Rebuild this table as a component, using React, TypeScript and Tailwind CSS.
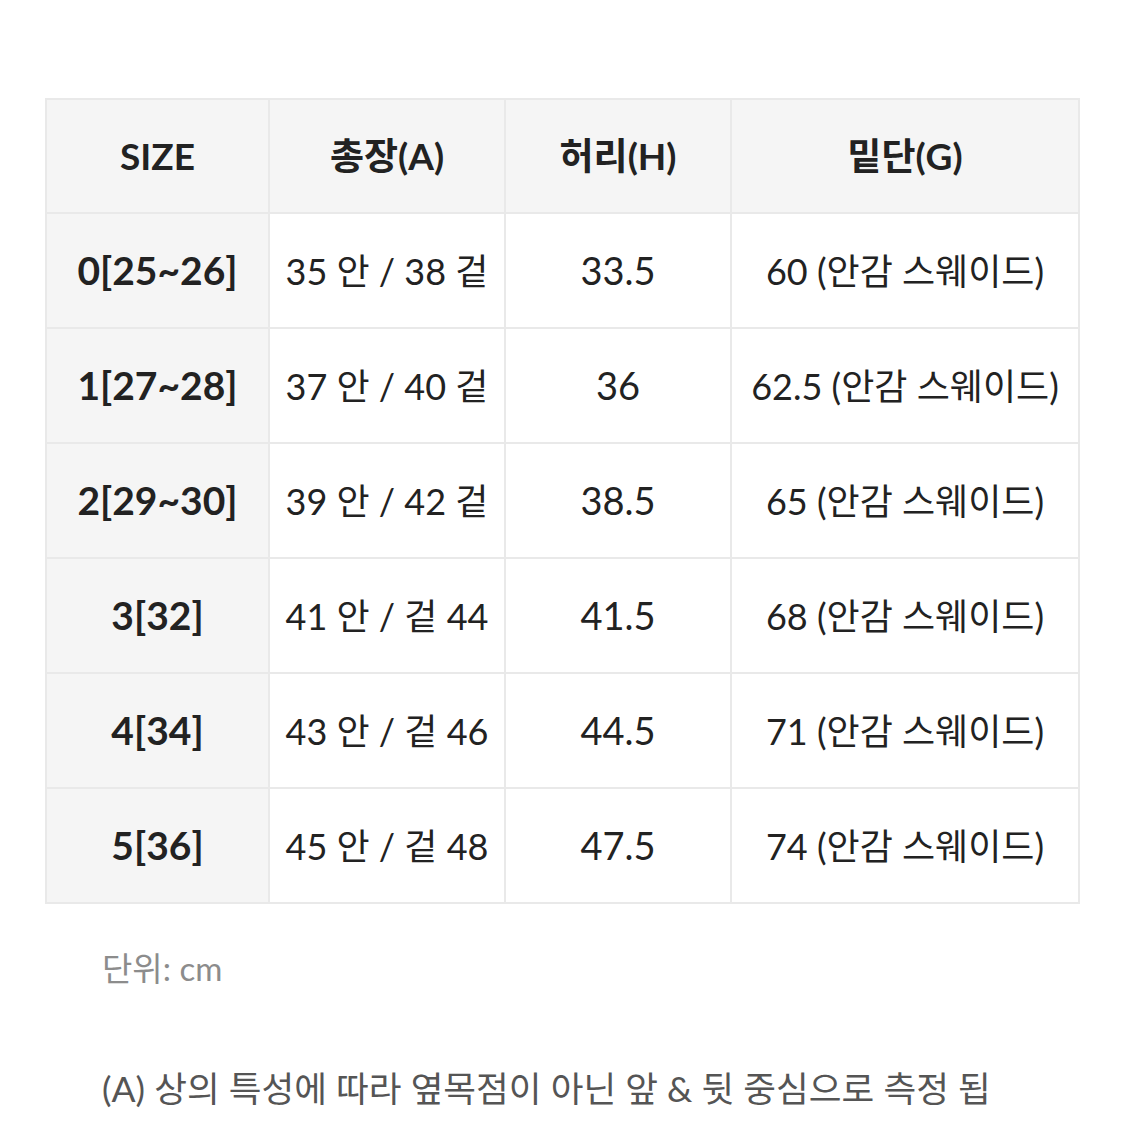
const rows: Array<[string, string, string, string]> = [
  ["0[25~26]", "35 안 / 38 겉", "33.5", "60 (안감 스웨이드)"],
  ["1[27~28]", "37 안 / 40 겉", "36", "62.5 (안감 스웨이드)"],
  ["2[29~30]", "39 안 / 42 겉", "38.5", "65 (안감 스웨이드)"],
  ["3[32]", "41 안 / 겉 44", "41.5", "68 (안감 스웨이드)"],
  ["4[34]", "43 안 / 겉 46", "44.5", "71 (안감 스웨이드)"],
  ["5[36]", "45 안 / 겉 48", "47.5", "74 (안감 스웨이드)"],
];

const font = "font-['Lato','Noto_Sans_CJK_KR',sans-serif]";

export default function App() {
  return (
    <div className={`min-h-[1125px] bg-white pt-[98px] pl-[45px] pr-[45px] ${font}`}>
      <table className="w-[1035px] border-collapse border-2 border-[#e9e9e9] text-[36px] text-[#222]">
        <colgroup>
          <col className="w-[223px]" />
          <col className="w-[236px]" />
          <col className="w-[226px]" />
          <col />
        </colgroup>
        <thead>
          <tr className="h-[114px] bg-[#f5f5f5]">
            {["SIZE", "총장(A)", "허리(H)", "밑단(G)"].map((h) => (
              <th key={h} className="border-2 border-[#e9e9e9] text-center text-[37px] font-bold">
                {h}
              </th>
            ))}
          </tr>
        </thead>
        <tbody>
          {rows.map((r) => (
            <tr key={r[0]} className="h-[115px]">
              <td className="border-2 border-[#e9e9e9] bg-[#f5f5f5] text-center text-[39px] font-bold">{r[0]}</td>
              <td className="border-2 border-[#e9e9e9] text-center whitespace-nowrap">{r[1]}</td>
              <td className="border-2 border-[#e9e9e9] text-center text-[38px]">{r[2]}</td>
              <td className="border-2 border-[#e9e9e9] text-center whitespace-nowrap">{r[3]}</td>
            </tr>
          ))}
        </tbody>
      </table>
      <p className="mt-[40px] pl-[57px] text-[33px] text-[#8c8c8c]">단위: cm</p>
      <p className="mt-[68px] pl-[57px] text-[35.6px] text-[#555]">(A) 상의 특성에 따라 옆목점이 아닌 앞 &amp; 뒷 중심으로 측정 됩</p>
    </div>
  );
}
